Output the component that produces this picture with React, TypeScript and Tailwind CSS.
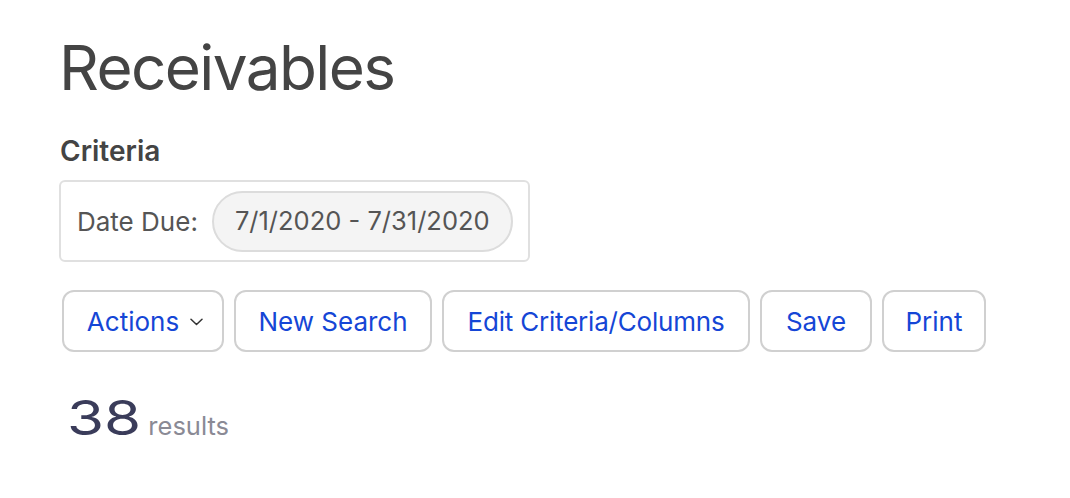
import React from "react";

function Chevron() {
  return (
    <svg width="13" height="8" viewBox="0 0 13 8" fill="none" className="ml-[11px] mt-[2px]">
      <path d="M1 1.2L6.5 6.5L12 1.2" stroke="#333" strokeWidth="1.5" strokeLinecap="round" strokeLinejoin="round" />
    </svg>
  );
}

function Btn({ children, className = "" }: { children: React.ReactNode; className?: string }) {
  return (
    <button className={"h-[62px] flex items-center justify-center rounded-[12px] border-2 border-[#d0d0d0] bg-white text-[#1546d6] text-[26px] whitespace-nowrap " + className}>
      {children}
    </button>
  );
}

export default function App() {
  return (
    <div className="w-[1070px] h-[498px] bg-white pl-[60px] pt-[36px]" style={{ fontFamily: "Inter, 'Liberation Sans', sans-serif" }}>
      <h1 className="text-[62px] leading-[64px] text-[#444] font-normal tracking-[-1.6px] -ml-[1px]">Receivables</h1>
      <div className="mt-[36px] text-[28px] leading-[30px] font-semibold text-[#444]">Criteria</div>
      <div className="mt-[14px] -ml-[1px] w-[471px] h-[82px] rounded-[6px] border-2 border-[#e0e0e0] flex items-center pl-[16px]">
        <span className="text-[26px] text-[#555]">Date Due:</span>
        <span className="ml-[14px] h-[61px] px-[21px] flex items-center rounded-full border-2 border-[#dcdcdc] bg-[#f4f4f4] text-[25.5px] text-[#555]">7/1/2020 - 7/31/2020</span>
      </div>
      <div className="mt-[28px] ml-[2px] flex gap-[10px]">
        <Btn className="w-[162px] pl-[4px]">
          Actions
          <Chevron />
        </Btn>
        <Btn className="w-[198px]">New Search</Btn>
        <Btn className="w-[308px] tracking-[-0.2px]">Edit Criteria/Columns</Btn>
        <Btn className="w-[112px]">Save</Btn>
        <Btn className="w-[104px]">Print</Btn>
      </div>
      <div className="mt-[42px] ml-[7px] flex items-baseline">
        <span className="inline-block origin-left scale-x-[1.25] text-[48px] leading-[48px] text-[#3a3c5a]">38</span>
        <span className="ml-[22px] text-[25.5px] text-[#8a8a95]">results</span>
      </div>
    </div>
  );
}
